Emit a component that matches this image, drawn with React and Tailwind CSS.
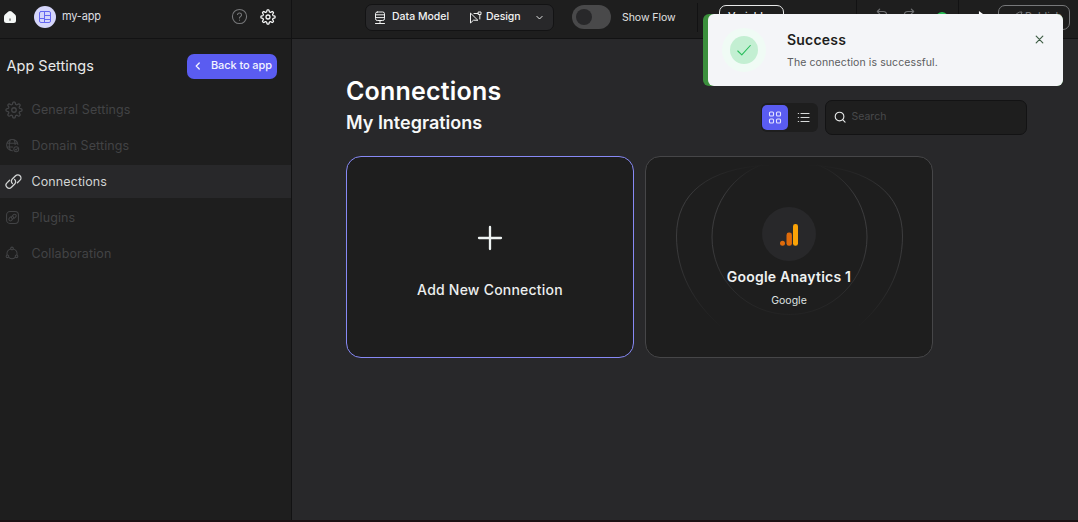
import React from "react";

const Svg = ({ className, children, vb = "0 0 24 24", w = 1.5 }) => (
  <svg viewBox={vb} className={className} fill="none" stroke="currentColor" strokeWidth={w} strokeLinecap="round" strokeLinejoin="round">
    {children}
  </svg>
);

function gearOutline() {
  const pts = [];
  for (let i = 0; i < 96; i++) {
    const a = (i / 96) * Math.PI * 2;
    const r = 9.2 + 1.5 * Math.tanh(2.2 * Math.cos(8 * a));
    pts.push(`${(12 + r * Math.sin(a)).toFixed(2)} ${(12 - r * Math.cos(a)).toFixed(2)}`);
  }
  return `M${pts.join("L")}Z`;
}
const gear = gearOutline();

const GearIcon = ({ className, w = 1.7 }) => (
  <Svg className={className} w={w}>
    <path d={gear} />
    <circle cx="12" cy="12" r="3" />
  </Svg>
);

const linkPath =
  "M13.6 9.2a4.4 4.4 0 0 1 .1 6.300l-4.600 4.700a4.400 4.400 0 0 1-6.300-6.300l3.700-3.700M10.400 14.800a4.400 4.400 0 0 1-.1-6.300l4.600-4.700a4.400 4.400 0 0 1 6.300 6.300l-3.700 3.700";

const NavItem = ({ icon, label, active }) => (
  <div className={`flex h-[33px] items-center ${active ? "bg-[#28282a] text-[#d2d4d4]" : "text-[#424345]"}`}>
    <span className="flex w-[31.5px] shrink-0 pl-[5px]">{icon}</span>
    <span className="text-[12.5px] leading-5 tracking-[0.1px]">{label}</span>
  </div>
);

function Sidebar() {
  return (
    <aside className="flex w-[292px] shrink-0 flex-col border-r border-[#121213] bg-[#1e1e1e]">
      <div className="flex h-[39px] shrink-0 items-center border-b border-[#121213] pb-[5px]">
        <svg viewBox="0 0 14 14" className="ml-[3px] size-[14px] text-[#f4f7f6]">
          <path d="M5.400 1.600Q7 .2 8.600 1.600L12 4.500q1 .9 1 2.200v3.800Q13 13 10.500 13h-7Q1 13 1 10.500V6.700Q1 5.400 2 4.500Z" fill="currentColor" />
          <path d="M7 8.500v2.200" stroke="#555" strokeWidth="1.200" />
        </svg>
        <span className="ml-[17px] flex size-[22px] items-center justify-center rounded-full bg-[#d5d6fb] text-[#6568f1]">
          <Svg vb="0 0 12 12" w={1} className="size-[12px]">
            <rect x=".5" y=".5" width="11" height="11" rx="1.500" />
            <path d="M5.500 .5v6M.5 7.500h5M5.500 4.500h6M5.500 4.500v7M5.500 8.500h6" />
          </Svg>
        </span>
        <span className="ml-[6px] text-[11px] tracking-[-0.2px] text-[#dedfe0]">my-app</span>
        <Svg className="mr-[12px] ml-auto size-[17px] text-[#77787a]" w={1.5}>
          <circle cx="12" cy="12" r="10" />
          <path d="M9.200 9.200a2.900 2.900 0 0 1 5.700.8c0 2-2.900 2.300-2.900 4" />
          <path d="M12 17v.2" />
        </Svg>
        <GearIcon className="mr-[15px] size-[16px] text-[#f5f6f6]" w={1.9} />
      </div>

      <div className="mt-[15px] flex h-[25px] items-center justify-between pr-[14px] pl-[6.500px]">
        <h2 className="pb-[1px] text-[14.5px] leading-6 text-[#e7e9e9]">App Settings</h2>
        <button className="flex h-[25px] w-[90px] items-center rounded-[7px] bg-[#5a5cf1] pb-[2px] text-[11px] font-medium whitespace-nowrap text-[#f2f3ff]">
          <Svg className="ml-[5px] size-[12px]" w={2.8}>
            <path d="M14.500 6 8.500 12l6 6" />
          </Svg>
          <span className="ml-[7px] tracking-[-0.1px]">Back to app</span>
        </button>
      </div>

      <nav className="mt-[14px] flex flex-col gap-[3px]">
        <NavItem label="General Settings" icon={<GearIcon className="size-[18px]" w={1.7} />} />
        <NavItem
          label="Domain Settings"
          icon={
            <Svg vb="0 0 16 16" w={1.1} className="size-[15px]">
              <path d="M13.700 7A6 6 0 1 0 8 13.500M2.300 5.500h11.200M2.200 9.500h6M6 1.700c-1.700 3.500-1.700 8.500 0 11.500M9.500 1.700c.9 1.800 1.300 3.500 1.300 5.300" />
              <circle cx="12" cy="12" r="2.600" />
              <path d="m10.900 12 .9.900 1.400-1.700" />
            </Svg>
          }
        />
        <NavItem
          label="Connections"
          active
          icon={
            <Svg className="size-[17px]" w={1.8}>
              <path d={linkPath} />
            </Svg>
          }
        />
        <NavItem
          label="Plugins"
          icon={
            <Svg className="size-[15px]" w={1.7}>
              <rect x="2.500" y="2.500" width="19" height="19" rx="5.500" />
              <g transform="translate(5.300 5.300) scale(.56)" strokeWidth="3">
                <path d={linkPath} />
              </g>
            </Svg>
          }
        />
        <NavItem
          label="Collaboration"
          icon={
            <Svg vb="0 0 16 16" w={1.2} className="-mt-[2px] size-[14px]">
              <circle cx="8" cy="2.800" r="1.500" />
              <circle cx="2.800" cy="11.800" r="1.500" />
              <circle cx="13.200" cy="11.800" r="1.500" />
              <path d="M6.400 3.400A5.600 5.600 0 0 0 2.400 9.900M9.600 3.400a5.600 5.600 0 0 1 4 6.500M4.300 12.900a5.600 5.600 0 0 0 7.400 0" />
            </Svg>
          }
        />
      </nav>
    </aside>
  );
}

function TopBar() {
  return (
    <header className="flex h-[39px] shrink-0 border-b border-[#121213] bg-[#1e1e1e] text-[10.5px] text-[#f0f1f1]">
      <div className="mt-[4px] ml-[73px] flex h-[27px] w-[189px] items-center rounded-[7px] border border-[#131314] bg-[#28282a] pb-[2px] font-medium whitespace-nowrap">
        <Svg className="mt-[2px] ml-[7px] size-[14px] shrink-0" vb="0 0 14 14" w={1}>
          <rect x="2.500" y="1" width="9" height="8.500" rx="1.800" />
          <path d="M2.500 3.800h9M2.500 6.600h9M7 9.500v2.500M2.500 12.500h9" />
        </Svg>
        <span className="ml-[5px] w-[57px]">Data Model</span>
        <Svg className="mt-[1px] ml-[20px] size-[13px] shrink-0" vb="0 0 13 13" w={1}>
          <path d="M1.500 2.500v9.500l3-2.800 4 .1ZM5 2.500h4M10.800 4v4" />
          <rect x="9.500" y="1" width="2.500" height="2.500" />
        </Svg>
        <span className="ml-[4px] w-[35px] tracking-[-0.05px]">Design</span>
        <Svg className="mt-[1px] ml-[14px] size-[9px] shrink-0" w={2.5}>
          <path d="m5 9 7 7 7-7" />
        </Svg>
      </div>
      <div className="mt-[5px] ml-[18px] flex h-[24px] w-[39px] items-center rounded-full bg-[#49494a] pl-[4px]">
        <span className="size-[16px] rounded-full bg-[#28282a]" />
      </div>
      <span className="mt-[9.500px] ml-[11px] w-[64px] leading-4 tracking-[-0.05px] whitespace-nowrap text-[#e0e1e1]">Show Flow</span>
      <div className="mt-[3px] ml-[11px] h-[29px] w-px bg-[#121213]" />
      <div className="mt-[5px] ml-[21px] h-[25px] w-[65px] rounded-[7px] border border-[#e8e9e9] pl-[8px] leading-[22px] font-medium">Variables</div>
      <div className="ml-[72px] h-[32px] w-px bg-[#121213]" />
      <Svg className="mt-[8px] ml-[18px] size-[14px] text-[#6f7072]" w={2}>
        <path d="M8 2 4 6l4 4M4 6h10a6 6 0 0 1 0 12H8" />
      </Svg>
      <Svg className="mt-[8px] ml-[13px] size-[14px] text-[#6f7072]" w={2}>
        <path d="m16 2 4 4-4 4M20 6H10a6 6 0 0 0 0 12h6" />
      </Svg>
      <span className="mt-[11.500px] ml-[20px] size-[12px] rounded-full bg-[#27bd54]" />
      <div className="ml-[10px] h-[32px] w-px bg-[#121213]" />
      <svg viewBox="0 0 12 12" className="mt-[11px] ml-[19px] size-[11px] shrink-0 fill-white">
        <path d="M1 0v12l8-6Z" />
      </svg>
      <div className="mt-[5px] ml-[9px] flex h-[25px] w-[72px] shrink-0 items-center rounded-[7px] border border-[#77787a] pb-[2px] pl-[12px] text-[#77787a]">
        <Svg className="size-[12px]" w={2}>
          <path d="M2 14 12 5q5-4 10-3-1 7-8 13l-3 3ZM7 16l-4 5" />
        </Svg>
        <span className="ml-[2px] font-medium">Publish</span>
      </div>
    </header>
  );
}

function Toast() {
  return (
    <div className="absolute top-[14px] left-[703px] flex h-[72px] w-[360px] rounded-[6px] bg-[#3b8f3c] pl-[5px]">
      <div className="flex w-full rounded-[6px] bg-[#f4f5f8]">
        <div className="mt-[14px] ml-[14px] flex size-[44px] items-center justify-center rounded-full bg-[#f0fbf5]">
          <div className="flex size-[28px] items-center justify-center rounded-full bg-[#c3efd2]">
            <Svg className="size-[16px] text-[#28bd5b]" vb="0 0 16 16" w={1.1}>
              <path d="m1.800 9 4 3.800L14.300 3.500" />
            </Svg>
          </div>
        </div>
        <div className="mt-[17px] ml-[21px] flex flex-col">
          <span className="text-[14px] leading-[18px] font-semibold tracking-[0.2px] text-[#1d1e20]">Success</span>
          <span className="mt-[6px] text-[10.5px] leading-4 tracking-[0.1px] text-[#5b5c60]">The connection is successful.</span>
        </div>
        <Svg className="mt-[21px] mr-[19px] ml-auto size-[9px] text-[#3f5e46]" vb="0 0 9 9" w={1.2}>
          <path d="m1.200 1.200 6.600 6.600M7.800 1.200 1.200 7.800" />
        </Svg>
      </div>
    </div>
  );
}

function AnalyticsCard() {
  return (
    <div className="relative flex h-[202px] w-[288px] flex-col items-center rounded-[15px] border border-[#464648] bg-[#1e1e1e]">
      <svg viewBox="0 0 288 202" className="absolute -top-px -left-px h-[202px] w-[288px]" fill="none">
        <defs>
          <linearGradient id="ring" x1="0" y1="8" x2="0" y2="172" gradientUnits="userSpaceOnUse">
            <stop offset="0" stopColor="#464648" stopOpacity="0" />
            <stop offset=".2" stopColor="#464648" stopOpacity=".75" />
            <stop offset=".5" stopColor="#464648" stopOpacity=".75" />
            <stop offset="1" stopColor="#464648" stopOpacity="0" />
          </linearGradient>
        </defs>
        <g stroke="url(#ring)">
          <ellipse cx="144.500" cy="81" rx="77.500" ry="77.500" />
          <path d="M124 9C62 12 31.500 38 31.500 80c0 36 17 67 45 91M164 9c62 3 93.500 29 93.500 71 0 36-17 67-45 91" />
        </g>
      </svg>
      <div className="relative mt-[50px] flex size-[54px] items-center justify-center rounded-full bg-[#28282a]">
        <svg viewBox="0 0 18 22" className="mt-[1px] h-[22px] w-[18px]">
          <circle cx="2.500" cy="19.300" r="2.500" fill="#df6b0b" />
          <rect x="6.500" y="8.500" width="5.400" height="13.300" rx="2.400" fill="#df6b0b" />
          <rect x="13" y="0" width="5" height="21.800" rx="2.300" fill="#faa307" />
        </svg>
      </div>
      <span className="relative mt-[6px] text-[14px] leading-5 font-semibold tracking-[0.22px] text-[#eff1f1]">Google Anaytics 1</span>
      <span className="relative mt-[6px] text-[10.5px] leading-4 text-[#dfe1e1]">Google</span>
    </div>
  );
}

export default function App() {
  return (
    <div className="relative flex h-[522px] w-[1078px] flex-col overflow-hidden bg-[#28282a] font-['Inter',sans-serif]">
      <div className="flex min-h-0 flex-1">
        <Sidebar />
        <div className="flex w-[786px] flex-col">
          <TopBar />
          <main className="pr-[51px] pl-[54px]">
            <div className="flex h-[117px] items-start justify-between">
              <div className="pt-[36px]">
                <h1 className="text-[25px] leading-8 font-semibold tracking-[0.2px] text-white">Connections</h1>
                <h2 className="mt-[4px] text-[18px] leading-6 font-semibold text-[#f7f8f8]">My Integrations</h2>
              </div>
              <div className="flex items-center gap-[7px] pt-[61px]">
                <div className="flex h-[29px] w-[57px] items-center rounded-[6px] bg-[#1e1e1e] pl-px">
                  <span className="flex h-[25px] w-[26px] items-center justify-center rounded-[5px] bg-[#5a5cf1] text-[#e3e3ff]">
                    <Svg className="size-[14px]" vb="0 0 14 14" w={1.1}>
                      <rect x="1.500" y="1" width="4" height="4" rx="1" />
                      <rect x="8.500" y="1" width="4" height="4" rx="1" />
                      <rect x="1.500" y="8" width="4" height="4" rx="1" />
                      <rect x="8.500" y="8" width="4" height="4" rx="1" />
                    </Svg>
                  </span>
                  <Svg className="-mt-px ml-[9px] size-[13px] text-[#d8dada]" vb="0 0 13 13" w={1.2}>
                    <path d="M4 2.500h8M4 6.500h8M4 10.500h8M1.300 2.500h.3M1.300 6.500h.3M1.300 10.500h.3" />
                  </Svg>
                </div>
                <div className="flex h-[35px] w-[202px] items-center rounded-[7px] border border-[#131314] bg-[#1e1e1e] pb-px">
                  <Svg className="ml-[8px] size-[12px] text-[#e8eaea]" vb="0 0 13 13" w={1.2}>
                    <circle cx="6" cy="6" r="4.700" />
                    <path d="m9.600 9.600 2.400 2.400" />
                  </Svg>
                  <span className="ml-[5.500px] pb-px text-[10.5px] text-[#48494b]">Search</span>
                </div>
              </div>
            </div>
            <div className="flex gap-[11px]">
              <div className="flex h-[202px] w-[288px] flex-col items-center rounded-[15px] border border-[#8789f5] bg-[#1e1e1e]">
                <Svg className="mt-[67.500px] size-[26px] text-[#eef3f2]" vb="0 0 26 26" w={2.3}>
                  <path d="M13 2v22M2 13h22" />
                </Svg>
                <span className="mt-[29.500px] text-[14px] leading-5 font-medium tracking-[0.22px] text-[#eceeee]">Add New Connection</span>
              </div>
              <AnalyticsCard />
            </div>
          </main>
        </div>
      </div>
      <div className="h-[2px] shrink-0 bg-[#1b1214]" />
      <Toast />
    </div>
  );
}
